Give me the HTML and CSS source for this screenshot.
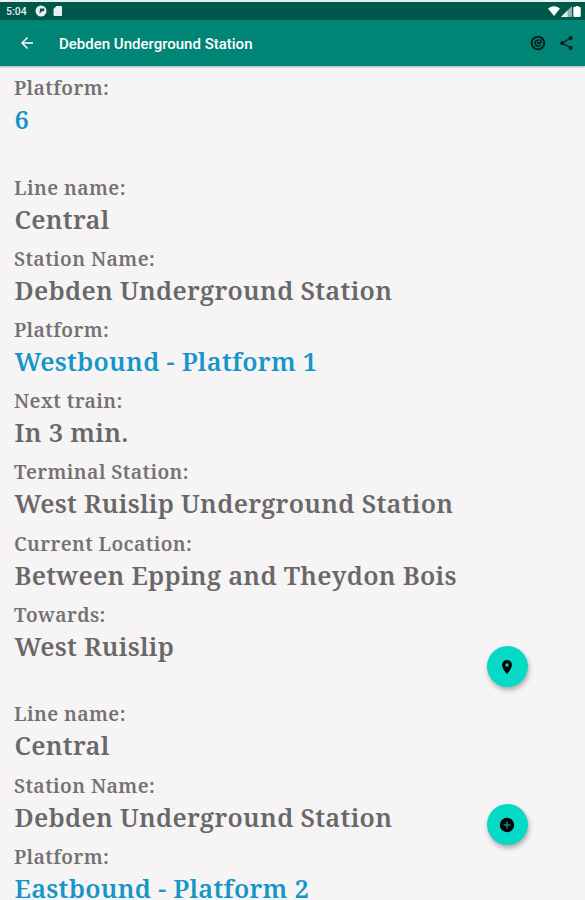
FILE: index.html
```html
<!DOCTYPE html>
<html lang="en">
<head>
  <meta charset="UTF-8">
  <title>Debden Underground Station</title>
  <link rel="stylesheet" href="styles.css">
</head>
<body>
<div class="status-bar">
  <span class="clock">5:04</span>
  <svg class="status-app" viewBox="0 0 12 12" width="12" height="12">
    <circle cx="6" cy="6" r="5.500" fill="#e8f1ef"/>
    <path d="M5 3.500h4.500L9 6 6.500 6.500 4.500 9z" fill="#00574b"/>
  </svg>
  <svg class="status-card" viewBox="0 0 10 12" width="10" height="12">
    <path d="M3.500 1H8a1 1 0 0 1 1 1v8a1 1 0 0 1-1 1H1.500a1 1 0 0 1-1-1V4z" fill="#e8f1ef"/>
  </svg>
  <div class="status-right">
    <svg viewBox="0 0 12 10" width="12" height="10"><path d="M0 2.500Q6-2 12 2.500L6 10z" fill="#fff"/></svg>
    <svg viewBox="0 0 11 11" width="11" height="11">
      <path d="M0 11 11 0v11z" fill="#8db8b0"/>
      <path d="M0 11 6.500 4.500V11z" fill="#e8f1ef"/>
    </svg>
    <svg viewBox="0 0 8 11" width="8" height="11"><path d="M2.500 0h3v1H7a1 1 0 0 1 .7 1v8a1 1 0 0 1-1 1H1.300a1 1 0 0 1-1-1V2A1 1 0 0 1 1 1h1.500z" fill="#fff"/></svg>
  </div>
</div>
<header class="toolbar">
  <svg class="back" viewBox="4 4 16 16" width="12" height="12">
    <path d="M20 11H7.830l5.590-5.590L12 4l-8 8 8 8 1.410-1.410L7.830 13H20z" fill="#fff"/>
  </svg>
  <h1>Debden Underground Station</h1>
  <svg class="target" viewBox="0 0 16 16" width="16" height="16" fill="none" stroke="#00211d">
    <circle cx="8" cy="8" r="6.300" stroke-width="2"/>
    <path d="M10.700 9.500A3 3 0 1 1 9.500 5.500M11 4.500v3.300H8" stroke-width="1.500"/>
    <circle cx="8" cy="8" r="1.300" fill="#00211d" stroke="none"/>
  </svg>
  <svg class="share" viewBox="3 2 18 20" width="13" height="14">
    <path d="M18 16.080c-.76 0-1.440.3-1.960.77L8.910 12.700c.05-.23.09-.46.09-.7s-.04-.47-.09-.7l7.050-4.110c.54.5 1.250.81 2.040.81 1.660 0 3-1.340 3-3s-1.340-3-3-3-3 1.340-3 3c0 .24.04.47.09.7L8.040 9.810C7.500 9.310 6.790 9 6 9c-1.660 0-3 1.340-3 3s1.340 3 3 3c.79 0 1.500-.31 2.040-.81l7.120 4.160c-.05.21-.08.43-.08.65 0 1.610 1.310 2.920 2.920 2.920s2.920-1.310 2.920-2.920-1.310-2.920-2.920-2.920z" fill="#00211d"/>
  </svg>
</header>
<main class="arrivals">
  <dl class="train">
    <dt>Platform:</dt>
    <dd class="platform">6</dd>
  </dl>
  <dl class="train">
    <dt>Line name:</dt>
    <dd>Central</dd>
    <dt>Station Name:</dt>
    <dd>Debden Underground Station</dd>
    <dt>Platform:</dt>
    <dd class="platform">Westbound - Platform 1</dd>
    <dt>Next train:</dt>
    <dd>In 3 min.</dd>
    <dt>Terminal Station:</dt>
    <dd>West Ruislip Underground Station</dd>
    <dt>Current Location:</dt>
    <dd>Between Epping and Theydon Bois</dd>
    <dt>Towards:</dt>
    <dd>West Ruislip</dd>
  </dl>
  <dl class="train">
    <dt>Line name:</dt>
    <dd>Central</dd>
    <dt>Station Name:</dt>
    <dd>Debden Underground Station</dd>
    <dt>Platform:</dt>
    <dd class="platform">Eastbound - Platform 2</dd>
  </dl>
</main>
<button class="fab fab-map" aria-label="Map">
  <svg viewBox="5 2 14 20" width="10" height="14">
    <path d="M12 2C8.130 2 5 5.130 5 9c0 5.250 7 13 7 13s7-7.750 7-13c0-3.870-3.130-7-7-7zm0 9.500a2.500 2.500 0 0 1 0-5 2.500 2.500 0 0 1 0 5z"/>
  </svg>
</button>
<button class="fab fab-add" aria-label="Add">
  <svg viewBox="0 0 16 16" width="16" height="16">
    <circle cx="8" cy="8" r="7.200"/>
    <path d="M8 4.500v7M4.500 8h7" stroke="#078f83" stroke-width="1.500"/>
  </svg>
</button>
</body>
</html>
```
FILE: styles.css
```css
* { box-sizing: border-box; }
body {
  margin: 0;
  height: 900px;
  overflow: hidden;
  position: relative;
  background: #f6f4f5;
  font-family: "Noto Serif", "DejaVu Serif", serif;
}
.status-bar {
  display: flex;
  align-items: center;
  height: 20px;
  padding: 0 4px 0 6px;
  border-top: 2px solid #e9f1ef;
  background: #00574b;
  color: #e8f1ef;
  font: 500 10.5px Roboto, sans-serif;
}
.clock { width: 29px; }
.status-card { margin-left: 6px; }
.status-right {
  display: flex;
  align-items: center;
  gap: 1px;
  margin-left: auto;
}
.toolbar {
  display: flex;
  align-items: center;
  height: 46px;
  padding: 0 12px 1px 21px;
  background: #008577;
  box-shadow: 0 1px 2px rgba(0, 0, 0, 0.3);
}
.toolbar h1 {
  flex: 1;
  margin: 3px 0 0 26px;
  color: #fff;
  font: 500 15px Roboto, sans-serif;
}
.share { margin-left: 14px; }
.arrivals { padding: 8.300px 14px 0; }
.train { margin: 0 0 35.700px; }
.train:last-child { margin-bottom: 0; }
.train dt {
  color: #737172;
  font-size: 19.5px;
  font-weight: 600;
  line-height: 27px;
  letter-spacing: 0.4px;
}
.train dd {
  margin: 0 0 7px 0.5px;
  color: #696768;
  font-size: 25.5px;
  font-weight: 600;
  line-height: 37.100px;
  letter-spacing: 0.27px;
}
.train dd:last-child { margin-bottom: 0; }
.train dd.platform { color: #1496c8; }
/* floating buttons */
.fab {
  position: absolute;
  left: 486.500px;
  display: flex;
  align-items: center;
  justify-content: center;
  width: 41px;
  height: 41px;
  padding: 0 1px 0 0;
  border: 0;
  border-radius: 50%;
  background: #04dac5;
  box-shadow: 1px 3px 5px rgba(0, 0, 0, 0.3);
}
.fab-map { top: 646px; }
.fab-add { top: 804px; }
```
